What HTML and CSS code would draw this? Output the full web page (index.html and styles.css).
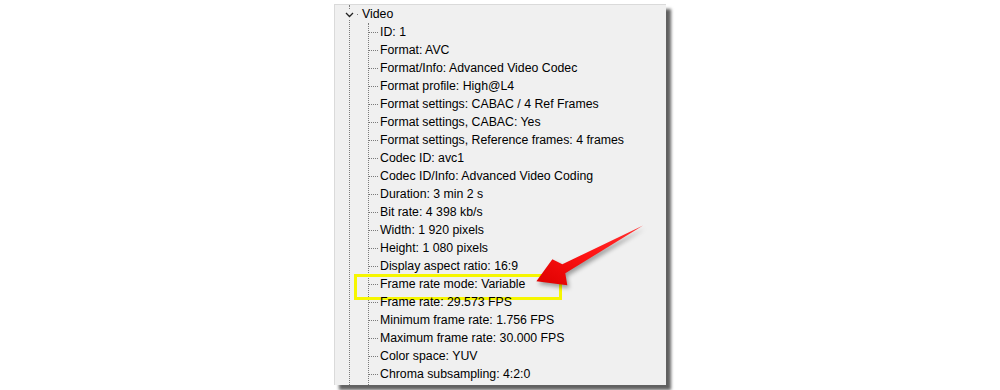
FILE: index.html
```html
<!DOCTYPE html>
<html lang="en">
<head>
    <meta charset="UTF-8">
    <meta name="viewport" content="width=device-width, initial-scale=1.0">
    <title>MediaInfo - Video</title>
    <link rel="stylesheet" href="styles.css">
</head>
<body>
    <div class="stage">
        <div class="panel">
            <div class="tree">
                <div class="root-row">
                    <span class="toggle">
                        <svg width="9" height="9" viewBox="0 0 9 9">
                            <polyline points="1,3 4.5,6.5 8,3" fill="none" stroke="#222" stroke-width="1.3"/>
                        </svg>
                    </span>
                    <span class="root-dot"></span>
                    <span class="label">Video</span>
                </div>
                <ul class="children">
                    <li>ID: 1</li>
                    <li>Format: AVC</li>
                    <li>Format/Info: Advanced Video Codec</li>
                    <li>Format profile: High@L4</li>
                    <li>Format settings: CABAC / 4 Ref Frames</li>
                    <li>Format settings, CABAC: Yes</li>
                    <li>Format settings, Reference frames: 4 frames</li>
                    <li>Codec ID: avc1</li>
                    <li>Codec ID/Info: Advanced Video Coding</li>
                    <li>Duration: 3 min 2 s</li>
                    <li>Bit rate: 4 398 kb/s</li>
                    <li>Width: 1 920 pixels</li>
                    <li>Height: 1 080 pixels</li>
                    <li>Display aspect ratio: 16:9</li>
                    <li class="highlight">Frame rate mode: Variable</li>
                    <li>Frame rate: 29.573 FPS</li>
                    <li>Minimum frame rate: 1.756 FPS</li>
                    <li>Maximum frame rate: 30.000 FPS</li>
                    <li>Color space: YUV</li>
                    <li>Chroma subsampling: 4:2:0</li>
                </ul>
            </div>

            <!-- annotation arrow, drawn in page coordinates -->
            <svg class="arrow" viewBox="334 4 332 381">
                <defs>
                    <linearGradient id="arrowFill" x1="0" y1="1" x2="1" y2="0">
                        <stop offset="0" stop-color="#dd0000"/>
                        <stop offset="0.5" stop-color="#ff1414"/>
                        <stop offset="1" stop-color="#ff3030"/>
                    </linearGradient>
                </defs>
                <polygon points="643,225 562,264 552,259 536,281 567,285 565,273" fill="url(#arrowFill)"/>
            </svg>
        </div>
    </div>
</body>
</html>
```

FILE: styles.css
```css
* {
    margin: 0;
    padding: 0;
    box-sizing: border-box;
}

body {
    background: #fff;
    font-family: 'Liberation Sans', Arial, sans-serif;
    font-size: 12.3px;
    color: #000;
}

.stage {
    display: flex;
    justify-content: center;
    padding-top: 4px;
    height: 390px;
}

.panel {
    position: relative;
    width: 332px;
    height: 381px;
    background: #f0f0f0;
    border-top: 1px solid #dadada;
    border-left: 1px solid #dadada;
    box-shadow: 5px 5px 3px rgba(0, 0, 0, 0.62);
    overflow: hidden;
}

.tree {
    display: flex;
    flex-direction: column;
    height: 100%;
    margin-left: 14px;
    border-left: 1px dotted #7a7a7a;
}

.root-row {
    display: flex;
    align-items: center;
    height: 18px;
}

.toggle {
    display: flex;
    align-items: center;
    justify-content: center;
    width: 11px;
    height: 11px;
    margin-left: -6px;
    background: #f0f0f0;
}

.root-dot {
    width: 1px;
    height: 1px;
    margin-left: 2px;
    background: #7a7a7a;
}

.root-row .label {
    margin-left: 4px;
    line-height: 18px;
}

.children {
    flex: 1;
    list-style: none;
    margin-left: 18px;
    border-left: 1px dotted #7a7a7a;
}

.children li {
    position: relative;
    display: flex;
    align-items: center;
    height: 18px;
    line-height: 18px;
    white-space: nowrap;
}

.children li::before {
    content: '';
    width: 9px;
    margin-right: 2px;
    border-top: 1px dotted #7a7a7a;
}

.children li.highlight::after {
    content: '';
    position: absolute;
    left: -15px;
    top: -1px;
    width: 202px;
    height: 20px;
    border: 3px solid #f6f600;
}

.arrow {
    position: absolute;
    left: 0;
    top: 0;
    width: 100%;
    height: 100%;
    filter: drop-shadow(2px 3px 2px rgba(0, 0, 0, 0.35));
}
```
